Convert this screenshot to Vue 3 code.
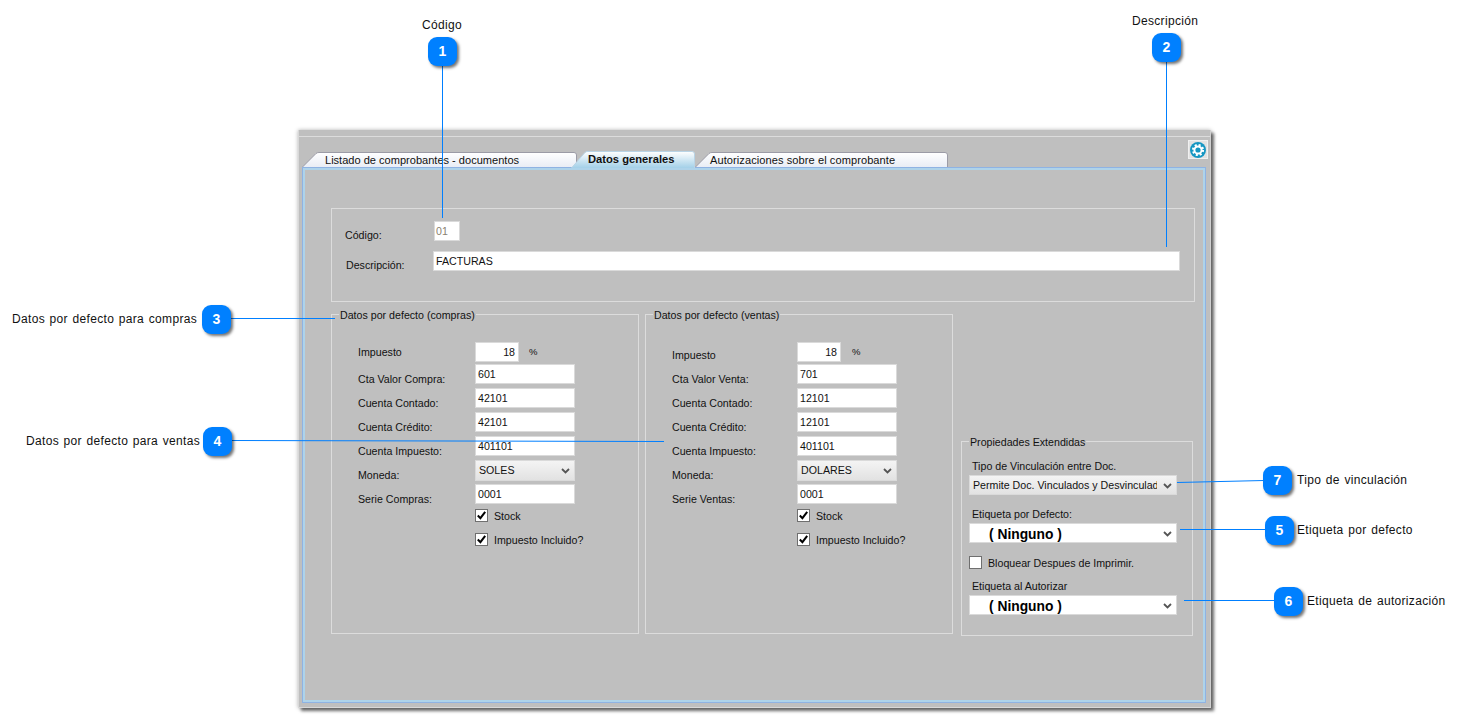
<script setup>
const tabs = [
  { text: 'Listado de comprobantes - documentos', cls: 'tab1', w: 275, h: 15 },
  { text: 'Datos generales', cls: 'tab2 active', w: 124, h: 17 },
  { text: 'Autorizaciones sobre el comprobante', cls: 'tab3', w: 253, h: 15 },
]
const tabPath = (t) => `M0.5 ${t.h} L14 1.5 Q15 0.5 17 0.5 L${t.w - 3} 0.5 Q${t.w - 0.5} 0.5 ${t.w - 0.5} 3 L${t.w - 0.5} ${t.h}`

const groups = [
  {
    cls: 'compras', legend: 'Datos por defecto (compras)', tax: '18',
    rows: [
      { label: 'Cta Valor Compra:', value: '601' },
      { label: 'Cuenta Contado:', value: '42101' },
      { label: 'Cuenta Crédito:', value: '42101' },
      { label: 'Cuenta Impuesto:', value: '401101' },
      { label: 'Moneda:', value: 'SOLES', select: true },
      { label: 'Serie Compras:', value: '0001' },
    ],
  },
  {
    cls: 'ventas', legend: 'Datos por defecto (ventas)', tax: '18',
    rows: [
      { label: 'Cta Valor Venta:', value: '701' },
      { label: 'Cuenta Contado:', value: '12101' },
      { label: 'Cuenta Crédito:', value: '12101' },
      { label: 'Cuenta Impuesto:', value: '401101' },
      { label: 'Moneda:', value: 'DOLARES', select: true },
      { label: 'Serie Ventas:', value: '0001' },
    ],
  },
]

const pins = [
  { n: 1, x: 428, y: 37 },
  { n: 2, x: 1152, y: 33 },
  { n: 3, x: 202, y: 305 },
  { n: 4, x: 203, y: 427 },
  { n: 5, x: 1265, y: 516 },
  { n: 6, x: 1274, y: 587 },
  { n: 7, x: 1263, y: 466 },
]
const lines = [
  [442.5, 60, 442.5, 218],
  [1166.5, 60, 1166.5, 247],
  [230, 318.5, 335, 318.5],
  [230, 440.5, 664, 441.5],
  [1180, 529.5, 1266, 529.5],
  [1184, 600.5, 1275, 600.5],
  [1177, 482.5, 1264, 480.5],
]
const captions = [
  { text: 'Código', x: 422, y: 17 },
  { text: 'Descripción', x: 1132, y: 13 },
  { text: 'Datos por defecto para compras', x: 12, y: 311 },
  { text: 'Datos por defecto para ventas', x: 26, y: 433 },
  { text: 'Tipo de vinculación', x: 1297, y: 472 },
  { text: 'Etiqueta por defecto', x: 1297, y: 522 },
  { text: 'Etiqueta de autorización', x: 1307, y: 593 },
]
const pos = (o) => ({ left: o.x + 'px', top: o.y + 'px' })
</script>

<template>
  <div class="stage">
    <section class="window">
      <div class="titlebar"></div>
      <div class="tabbar">
        <div class="tabs">
          <div v-for="t in tabs" :key="t.text" class="tab" :class="t.cls">
            <svg class="tab-bg" :width="t.w" :height="t.h">
              <defs>
                <linearGradient id="gPlain" x1="0" y1="0" x2="0" y2="1">
                  <stop offset="0" stop-color="#ffffff" />
                  <stop offset="1" stop-color="#e9edf5" />
                </linearGradient>
                <linearGradient id="gActive" x1="0" y1="0" x2="0" y2="1">
                  <stop offset="0" stop-color="#ffffff" />
                  <stop offset="1" stop-color="#a3d0e8" />
                </linearGradient>
              </defs>
              <path :d="tabPath(t)" :fill="t.cls.includes('active') ? 'url(#gActive)' : 'url(#gPlain)'" :stroke="t.cls.includes('active') ? '#b9d4e6' : '#9b9ba6'" />
            </svg>
            <span class="tab-text">{{ t.text }}</span>
          </div>
        </div>
        <div class="gear">
          <svg width="16" height="16" viewBox="0 0 16 16">
            <circle cx="8" cy="8" r="8" fill="#1596c2" />
            <circle cx="8" cy="8" r="3.6" fill="none" stroke="#fff" stroke-width="2" />
            <circle cx="8" cy="8" r="5" fill="none" stroke="#fff" stroke-width="2.2" stroke-dasharray="2 1.93" />
          </svg>
        </div>
      </div>

      <div class="panel">
        <div class="box head">
          <div class="head-row">
            <span class="head-code">Código:</span>
            <div class="field code">01</div>
          </div>
          <div class="head-row desc">
            <span class="head-desc">Descripción:</span>
            <div class="field wide">FACTURAS</div>
          </div>
        </div>

        <div class="columns">
          <div v-for="g in groups" :key="g.cls" class="box group" :class="g.cls">
            <span class="legend">{{ g.legend }}</span>
            <div class="form">
              <span class="lbl tax-lbl">Impuesto</span>
              <div class="tax">
                <div class="field num">{{ g.tax }}</div>
                <span class="pct">%</span>
              </div>
              <template v-for="r in g.rows" :key="r.label">
                <span class="lbl">{{ r.label }}</span>
                <div v-if="r.select" class="field sel gray">
                  <span class="sel-text">{{ r.value }}</span>
                  <svg class="chev" width="9" height="6" viewBox="0 0 9 6"><path d="M1 1 L4.5 4.5 L8 1" fill="none" stroke="#555" stroke-width="1.8" /></svg>
                </div>
                <div v-else class="field">{{ r.value }}</div>
              </template>
              <span></span>
              <label class="check">
                <span class="cb"><svg width="11" height="11" viewBox="0 0 11 11"><path d="M1.8 5.5 L4.4 8.2 L9.2 1.8" fill="none" stroke="#000" stroke-width="2" /></svg></span>
                <span>Stock</span>
              </label>
              <span></span>
              <label class="check">
                <span class="cb"><svg width="11" height="11" viewBox="0 0 11 11"><path d="M1.8 5.5 L4.4 8.2 L9.2 1.8" fill="none" stroke="#000" stroke-width="2" /></svg></span>
                <span>Impuesto Incluido?</span>
              </label>
            </div>
          </div>

          <div class="box ext">
            <span class="legend">Propiedades Extendidas</span>
            <span class="ext-lbl first">Tipo de Vinculación entre Doc.</span>
            <div class="field sel gray ext-sel">
              <span class="sel-text clip">Permite Doc. Vinculados y Desvinculad</span>
              <svg class="chev" width="9" height="6" viewBox="0 0 9 6"><path d="M1 1 L4.5 4.5 L8 1" fill="none" stroke="#555" stroke-width="1.8" /></svg>
            </div>
            <span class="ext-lbl second">Etiqueta por Defecto:</span>
            <div class="field sel ext-sel">
              <span class="sel-text bold">( Ninguno )</span>
              <svg class="chev" width="9" height="6" viewBox="0 0 9 6"><path d="M1 1 L4.5 4.5 L8 1" fill="none" stroke="#555" stroke-width="1.8" /></svg>
            </div>
            <label class="check lock"><span class="cb"></span><span>Bloquear Despues de Imprimir.</span></label>
            <span class="ext-lbl third">Etiqueta al Autorizar</span>
            <div class="field sel ext-sel">
              <span class="sel-text bold">( Ninguno )</span>
              <svg class="chev" width="9" height="6" viewBox="0 0 9 6"><path d="M1 1 L4.5 4.5 L8 1" fill="none" stroke="#555" stroke-width="1.8" /></svg>
            </div>
          </div>
        </div>
      </div>
    </section>

    <svg class="leaders" width="1463" height="716">
      <line v-for="(l, i) in lines" :key="i" :x1="l[0]" :y1="l[1]" :x2="l[2]" :y2="l[3]" stroke="#007fff" stroke-width="1" />
    </svg>
    <div v-for="p in pins" :key="p.n" class="pin" :style="pos(p)">{{ p.n }}</div>
    <span v-for="c in captions" :key="c.text" class="caption" :style="pos(c)">{{ c.text }}</span>
  </div>
</template>

<style scoped>
.stage {
  position: relative;
  width: 1463px;
  height: 716px;
  overflow: hidden;
  padding: 130px 0 0 298px;
  box-sizing: border-box;
  background: #fff;
  font-family: "Liberation Sans", Arial, sans-serif;
  font-size: 10.65px;
  line-height: 20px;
  color: #111;
}
.window {
  width: 913px;
  height: 578px;
  box-sizing: border-box;
  padding: 0 4px;
  background: #bfbfbf;
  border-right: 1px solid #d0d0d0;
  border-left: 1px solid #d8d8d8;
  border-bottom: 1px solid #d8d8d8;
  box-shadow: 3px 3px 3px rgba(0, 0, 0, 0.55), 0 0 4px rgba(0, 0, 0, 0.3);
}
.titlebar {
  height: 6px;
  margin: 0 -4px;
  border-bottom: 1px solid #dcdcdc;
}
.tabbar {
  display: flex;
  justify-content: space-between;
  height: 30px;
  margin: 0 -2px 0 -1px;
}
.tabs {
  display: flex;
  align-items: flex-end;
  margin-bottom: -1px;
}
.tab {
  position: relative;
  height: 15px;
  line-height: 17px;
  font-size: 11.05px;
  margin-bottom: 1px;
}
.tab-bg {
  position: absolute;
  left: 0;
  top: 0;
}
.tab-text {
  position: relative;
}
.tab1 { width: 275px; padding-left: 23px; box-sizing: border-box; }
.tab2 { width: 124px; padding-left: 17px; box-sizing: border-box; margin: 0 0 0 -6px; height: 17px; font-weight: bold; z-index: 1; font-size: 11.2px; line-height: 17px; }
.tab3 { width: 253px; padding-left: 15px; box-sizing: border-box; letter-spacing: 0.08px; }
.gear {
  display: flex;
  align-items: center;
  justify-content: center;
  width: 20px;
  height: 19px;
  margin-top: 3px;
  background: #e2e2e2;
  border: 1px solid #f0f0f0;
  box-sizing: border-box;
}
.panel {
  height: 536px;
  box-sizing: border-box;
  padding: 40px 0 0 28px;
  border: 1px solid #8fb3e3;
  box-shadow: inset 0 0 0 2px #aed3ea;
  position: relative;
  margin-left: -1px;
}
.box {
  position: relative;
  box-sizing: border-box;
  border: 1px solid #dcdcdc;
}
.head {
  width: 864px;
  height: 94px;
  padding: 12px 0 0 13px;
}
.head-row {
  display: flex;
  align-items: flex-start;
}
.head-code { width: 89px; padding-top: 4px; }
.head-desc { width: 88px; padding-left: 1px; padding-top: 4px; box-sizing: border-box; }
.head-row.desc { margin-top: 10px; }
.head-row:first-child { height: 20px; }
.field {
  box-sizing: border-box;
  height: 20px;
  line-height: 18px;
  padding-left: 2px;
  background: #fff;
  border: 1px solid #dadada;
  white-space: nowrap;
  overflow: hidden;
}
.code { width: 26px; color: #8a7f70; padding-left: 1px; }
.wide { width: 747px; }
.columns {
  display: grid;
  grid-template-columns: 308px 308px 232px;
  column-gap: 6px;
  margin-top: 12px;
  height: 321px;
}
.group { height: 320px; }
.legend {
  position: absolute;
  top: -10px;
  left: 7px;
  padding: 0 1px;
  background: #bfbfbf;
  white-space: nowrap;
}
.form {
  display: grid;
  grid-auto-rows: 24px;
  grid-template-rows: 22px;
  padding: 27px 0 0 26px;
}
.compras .form { grid-template-columns: 117px 100px; }
.ventas .form { grid-template-columns: 125px 100px; }
.lbl {
  padding-top: 5px;
  white-space: nowrap;
}
.tax-lbl { padding-top: 0; }
.ventas .tax-lbl { padding-top: 3px; }
.tax {
  display: flex;
}
.num {
  width: 44px;
  text-align: right;
  padding-right: 3px;
}
.pct { margin-left: 10px; font-size: 9.5px; }
.ventas .pct { margin-left: 11px; }
.sel {
  position: relative;
  height: 21px;
  padding-left: 3px;
}
.gray {
  background: linear-gradient(#f4f4f4, #e2e2e2);
}
.chev {
  position: absolute;
  right: 4px;
  top: 7px;
}
.check {
  display: flex;
  align-items: flex-start;
  white-space: nowrap;
  line-height: 15px;
  padding-top: 1px;
}
.cb {
  display: flex;
  align-items: center;
  justify-content: center;
  width: 13px;
  height: 13px;
  box-sizing: border-box;
  margin-right: 6px;
  background: #fff;
  border: 1px solid #6f6f6f;
}
.ext {
  grid-column: 3;
  align-self: end;
  height: 195px;
  margin-left: 2px;
  width: 232px;
  padding: 0 0 0 7px;
  display: flex;
  flex-direction: column;
  align-items: flex-start;
  margin-bottom: -1px;
}
.ext-lbl {
  padding-left: 3px;
  line-height: 14px;
}
.first { margin-top: 17px; }
.second { margin-top: 12px; }
.third { margin-top: 8px; }
.ext-sel {
  width: 208px;
  height: 20px;
  margin-top: 2px;
}
.clip {
  display: block;
  width: 184px;
  overflow: hidden;
}
.bold {
  display: block;
  font-weight: bold;
  font-size: 13.8px;
  line-height: 21px;
  color: #000;
  padding-left: 16px;
}
.lock {
  margin-top: 12px;
  height: 15px;
}
.leaders {
  position: absolute;
  left: 0;
  top: 0;
  pointer-events: none;
}
.pin {
  position: absolute;
  width: 29px;
  height: 29px;
  border-radius: 9px;
  background: #0080ff;
  box-shadow: 2px 2px 3px rgba(0, 0, 0, 0.55);
  color: #fff;
  font-weight: bold;
  font-size: 14px;
  line-height: 28px;
  text-align: center;
}
.caption {
  position: absolute;
  font-size: 12px;
  line-height: 16px;
  color: #111;
  white-space: nowrap;
  letter-spacing: 0.32px;
  word-spacing: 1px;
}
</style>
